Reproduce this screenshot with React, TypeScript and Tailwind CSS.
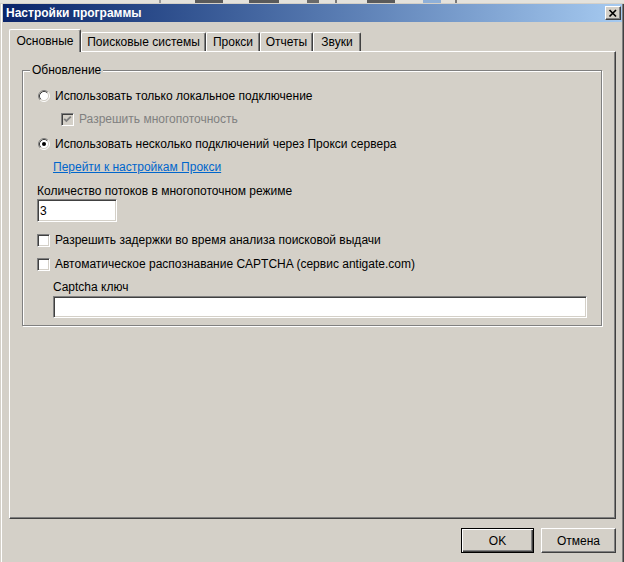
import React from "react";

const sunken =
  "border border-t-[#808080] border-l-[#808080] border-b-white border-r-white shadow-[inset_1px_1px_0_#404040,inset_-1px_-1px_0_#d4d0c8]";

function Radio({ checked = false }: { checked?: boolean }) {
  return (
    <svg width="12" height="12" viewBox="0 0 12 12" className="shrink-0">
      <circle cx="6" cy="6" r="4.5" fill="#fff" />
      <path d="M2.11 9.89 A5.5 5.5 0 0 1 9.89 2.11" fill="none" stroke="#808080" strokeWidth="1" />
      <path d="M9.89 2.11 A5.5 5.5 0 0 1 2.11 9.89" fill="none" stroke="#fff" strokeWidth="1" />
      <path d="M2.82 9.18 A4.5 4.5 0 0 1 9.18 2.82" fill="none" stroke="#404040" strokeWidth="1" />
      <path d="M9.18 2.82 A4.5 4.5 0 0 1 2.82 9.18" fill="none" stroke="#d4d0c8" strokeWidth="1" />
      {checked && <circle cx="6" cy="6" r="2" fill="#000" />}
    </svg>
  );
}

function Check({ checked = false, disabled = false }: { checked?: boolean; disabled?: boolean }) {
  return (
    <div className={`w-[13px] h-[13px] shrink-0 flex items-center justify-center ${disabled ? "bg-[#d4d0c8]" : "bg-white"} ${sunken}`}>
      {checked && (
        <svg width="9" height="9" viewBox="0 0 9 9">
          <polyline points="1.2,3.8 3.4,6 7.8,1.6" fill="none" stroke={disabled ? "#808080" : "#000"} strokeWidth="1.8" />
        </svg>
      )}
    </div>
  );
}

const tabs = [
  { label: "Основные", w: "w-[72px]", active: true },
  { label: "Поисковые системы", w: "w-[125px]", active: false },
  { label: "Прокси", w: "w-[54px]", active: false },
  { label: "Отчеты", w: "w-[53px]", active: false },
  { label: "Звуки", w: "w-[48px]", active: false },
];

export default function App() {
  return (
    <div className="w-[624px] h-[562px] overflow-hidden bg-[#d4d0c8] font-['Liberation_Sans',Arial,sans-serif] text-[12px] leading-[14px] text-black flex flex-col">
      {/* bits of the window behind */}
      <div className="h-[4px] flex items-start">
        <div className="w-[159px] h-[3px] bg-[#e4e2dc]" />
        <div className="w-[2px] h-[3px] bg-[#9a9a9a]" />
        <div className="w-[34px] h-[3px] bg-[#e4e2dc]" />
        <div className="w-[28px] h-[3px] bg-[#5a5a5a]" />
        <div className="w-[26px] h-[3px] bg-[#e4e2dc]" />
        <div className="w-[30px] h-[3px] bg-[#5a5a5a]" />
        <div className="w-[28px] h-[3px] bg-[#e4e2dc]" />
        <div className="w-[12px] h-[3px] bg-[#6a6a6a]" />
        <div className="w-[16px] h-[3px] bg-[#e4e2dc]" />
        <div className="w-[2px] h-[3px] bg-[#7a7a7a]" />
        <div className="w-[30px] h-[3px] bg-[#e4e2dc]" />
        <div className="w-[28px] h-[3px] bg-[#5a5a5a]" />
        <div className="w-[28px] h-[3px] bg-[#e4e2dc]" />
        <div className="w-[18px] h-[3px] bg-[#8fb0d8]" />
        <div className="w-[14px] h-[3px] bg-[#e4e2dc]" />
        <div className="w-[2px] h-[3px] bg-[#7a7a7a]" />
        <div className="flex-1 h-[3px] bg-[#e4e2dc]" />
      </div>

      <div className="flex-1 flex flex-col ml-[1px] border-l border-white border-r border-r-[#404040] shadow-[inset_-1px_0_0_#808080]">
        {/* title bar */}
        <div className="ml-[1px] mr-[1px] h-[18px] bg-linear-to-r from-[#0a246a] to-[#a6caf0] flex items-center justify-between pl-[3px] pr-[1px]">
          <span className="text-white font-bold text-[12px]">Настройки программы</span>
          <div className="w-[16px] h-[14px] bg-[#d4d0c8] border-t border-l border-white border-r border-b border-r-[#404040] border-b-[#404040] shadow-[inset_-1px_-1px_0_#808080] flex items-center justify-center">
            <svg width="10" height="9" viewBox="0 0 10 9">
              <path d="M1.5 1 L8 7.5 M8 1 L1.5 7.5" stroke="#000" strokeWidth="1.7" />
            </svg>
          </div>
        </div>

        {/* tabs */}
        <div className="mt-[7px] pl-[7px] h-[22px] flex items-end">
          {tabs.map((t) =>
            t.active ? (
              <div
                key={t.label}
                className={`${t.w} h-[23px] -mb-[1px] relative z-10 bg-[#d4d0c8] rounded-t-[2px] border-t border-l border-white border-r border-r-[#404040] shadow-[inset_-1px_0_0_#808080] flex items-center justify-center pb-[1px]`}
              >
                {t.label}
              </div>
            ) : (
              <div
                key={t.label}
                className={`${t.w} h-[19px] rounded-t-[2px] border-t border-l border-white border-r border-r-[#404040] shadow-[inset_-1px_0_0_#808080] flex items-center justify-center`}
              >
                {t.label}
              </div>
            )
          )}
        </div>

        {/* tab page */}
        <div className="ml-[7px] w-[607px] h-[468px] border-t border-l border-white border-r border-b border-r-[#404040] border-b-[#404040] shadow-[inset_-1px_-1px_0_#808080]">
          <div className="relative ml-[12px] mt-[18px] w-[580px] h-[256px] border border-[#808080] shadow-[inset_1px_1px_0_#fff,1px_1px_0_#fff]">
            <span className="absolute -top-[8px] left-[7px] px-[2px] bg-[#d4d0c8]">Обновление</span>

            <div className="flex flex-col">
              <div className="mt-[17px] h-[16px] pl-[15px] flex items-center gap-[5px]">
                <Radio />
                <span>Использовать только локальное подключение</span>
              </div>
              <div className="mt-[7px] h-[16px] pl-[38px] flex items-center gap-[5px]">
                <Check checked disabled />
                <span className="text-[#808080]">Разрешить многопоточность</span>
              </div>
              <div className="mt-[9px] h-[16px] pl-[15px] flex items-center gap-[5px]">
                <Radio checked />
                <span>Использовать несколько подключений через Прокси сервера</span>
              </div>
              <div className="mt-[8px] h-[14px] pl-[30px]">
                <a className="text-[#0066cc] underline cursor-pointer">Перейти к настройкам Прокси</a>
              </div>
              <div className="mt-[10px] h-[14px] pl-[14px]">Количество потоков в многопоточном режиме</div>
              <div className={`mt-[1px] ml-[14px] w-[80px] h-[23px] bg-white flex items-center pl-[2px] ${sunken}`}>3</div>
              <div className="mt-[10px] h-[16px] pl-[14px] flex items-center gap-[5px]">
                <Check />
                <span>Разрешить задержки во время анализа поисковой выдачи</span>
              </div>
              <div className="mt-[8px] h-[16px] pl-[14px] flex items-center gap-[5px]">
                <Check />
                <span>Автоматическое распознавание CAPTCHA (сервис antigate.com)</span>
              </div>
              <div className="mt-[8px] h-[14px] pl-[30px]">Captcha ключ</div>
              <div className={`mt-[2px] ml-[30px] w-[534px] h-[22px] bg-white ${sunken}`} />
            </div>
          </div>
        </div>

        {/* buttons */}
        <div className="mt-[9px] pr-[7px] flex justify-end gap-[7px]">
          <button className="w-[73px] h-[25px] bg-[#d4d0c8] border border-black shadow-[inset_1px_1px_0_#fff,inset_-1px_-1px_0_#404040,inset_-2px_-2px_0_#808080] flex items-center justify-center">
            OK
          </button>
          <button className="w-[75px] h-[25px] bg-[#d4d0c8] border-t border-l border-white border-r border-b border-r-[#404040] border-b-[#404040] shadow-[inset_-1px_-1px_0_#808080] flex items-center justify-center">
            Отмена
          </button>
        </div>
      </div>
    </div>
  );
}
